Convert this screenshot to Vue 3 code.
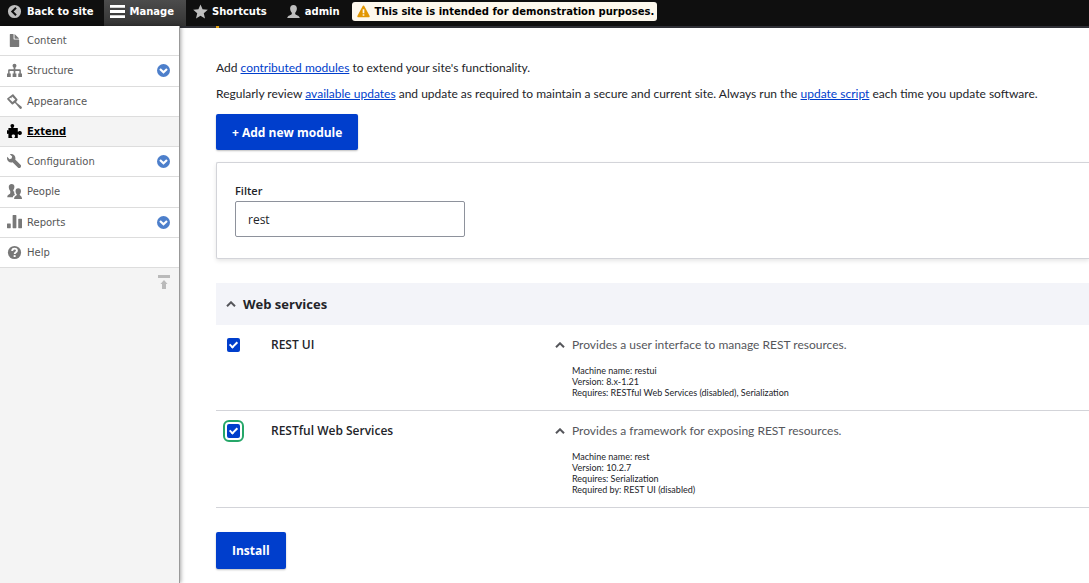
<script setup>
import { ref } from 'vue'

const menu = [
  { name: 'Content', icon: 'content' },
  { name: 'Structure', icon: 'structure', sub: true },
  { name: 'Appearance', icon: 'appearance' },
  { name: 'Extend', icon: 'extend', active: true },
  { name: 'Configuration', icon: 'configuration', sub: true },
  { name: 'People', icon: 'people' },
  { name: 'Reports', icon: 'reports', sub: true },
  { name: 'Help', icon: 'help' },
]

const filter = ref('rest')

const modules = ref([
  {
    id: 'restui',
    name: 'REST UI',
    checked: true,
    description: 'Provides a user interface to manage REST resources.',
    details: [
      'Machine name: restui',
      'Version: 8.x-1.21',
      'Requires: RESTful Web Services (disabled), Serialization',
    ],
  },
  {
    id: 'rest',
    name: 'RESTful Web Services',
    checked: true,
    focused: true,
    description: 'Provides a framework for exposing REST resources.',
    details: [
      'Machine name: rest',
      'Version: 10.2.7',
      'Requires: Serialization',
      'Required by: REST UI (disabled)',
    ],
  },
])
</script>

<template>
  <div class="page">
    <header class="toolbar">
      <a class="tab back" href="#">
        <svg class="tab-icon" viewBox="0 0 16 16"><path fill="#bebebe" fill-rule="evenodd" d="M8 1a7 7 0 1 0 0 14A7 7 0 0 0 8 1zm2.4 10.3L8.9 12.8 4.1 8l4.8-4.8 1.5 1.5L7.1 8z" /></svg>
        Back to site
      </a>
      <a class="tab manage" href="#">
        <svg class="tab-icon" viewBox="0 0 16 16"><path fill="#fff" d="M0 1h16v3H0zM0 6.5h16v3H0zM0 12h16v3H0z" /></svg>
        Manage
      </a>
      <a class="tab" href="#">
        <svg class="tab-icon" viewBox="0 0 16 16"><path fill="#bebebe" d="M8 .5l2.2 5.2 5.6.5-4.3 3.7 1.3 5.6L8 12.6l-4.8 2.9 1.3-5.6L.2 6.2l5.6-.5z" /></svg>
        Shortcuts
      </a>
      <a class="tab" href="#">
        <svg class="tab-icon" viewBox="0 0 16 16"><path fill="#bebebe" d="M8 1c2.4 0 3.7 1.6 3.6 3.9C11.500 7 10.700 8.600 9.800 9.400v1.200c.2 1 4.700 1.500 4.900 4.400H1.300c.2-2.900 4.700-3.400 4.900-4.400V9.400C5.300 8.600 4.500 7 4.400 4.900 4.300 2.600 5.600 1 8 1z" /></svg>
        admin
      </a>
      <div class="notice" role="status">
        <svg class="warn" viewBox="0 0 14 14"><path fill="#e29700" d="M7 .6c.5 0 .8.3 1 .7l5.500 10.300c.5.900 0 1.700-1 1.700h-11c-1 0-1.500-.8-1-1.700L6 1.300c.2-.4.5-.7 1-.7z" /><path fill="#fdf8ed" d="M6.100 4.500h1.800v4.300H6.100zM6.100 10h1.800v1.700H6.100z" /></svg>
        This site is intended for demonstration purposes.
      </div>
    </header>

    <div class="body">
      <aside class="tray">
        <nav class="menu" aria-label="Administration">
          <div v-for="item in menu" :key="item.name" class="menu-row" :class="{ active: item.active }">
            <a href="#" class="menu-link">
              <svg class="menu-icon" viewBox="0 0 16 16" fill="#787878">
                <template v-if="item.icon === 'content'">
                  <path d="M12.502 7h-5C7.226 7 7 6.775 7 6.500v-5c0-.275-.225-.5-.5-.5h-3c-.275 0-.5.225-.5.5v13.029c0 .275.225.5.5.5h9c.275 0 .5-.225.5-.5V7.500c0-.275-.225-.5-.498-.5z" />
                  <path d="M8.502 6h4c.275 0 .34-.159.146-.354L8.355 1.354C8.160 1.159 8.002 1.225 8.002 1.500v4c-.001.275.225.5.5.5z" />
                </template>
                <template v-else-if="item.icon === 'structure'">
                  <circle cx="8" cy="3" r="2.100" />
                  <path d="M7.100 4h1.800v2.700h4.600c.8 0 1.300.5 1.300 1.300v3.300H16V15h-4v-3.700h1.200V8.400H8.900v2.900H10V15H6v-3.700h1.100V8.400H2.800v2.900H4V15H0v-3.700h1.200V8c0-.8.5-1.300 1.300-1.300h4.600z" />
                </template>
                <template v-else-if="item.icon === 'appearance'">
                  <path fill-rule="evenodd" d="M5.700.4L.5 4.500c-.5.4-.5.9-.1 1.300l4.700 5.200c.4.4 1 .4 1.400 0l1.300-1.200c.5-.3.900-.1 1.300.4l4.200 5.100c.6.700 1.600.8 2.200.2s.5-1.600-.2-2.200l-5-4.100c-.5-.4-.6-.9-.3-1.300l1-1.300c.4-.5.3-.9-.1-1.300L6.900.4c-.4-.3-.8-.3-1.200 0zM5.300 2.600L8.800 5.900 5.900 8.600 2.300 5l1.300-1.100 1 1z" />
                </template>
                <template v-else-if="item.icon === 'extend'">
                  <path fill="#000" d="M4.600 4.200C4.700 3.300 3.700 3 3.700 1.800 3.700.8 4.500 0 5.700 0s2 .8 2 1.800c0 1.200-1 1.500-.9 2.400h4.700v4c1 .2 1.200-.7 2.400-.7 1.100 0 2 .900 2 2.100s-.9 2.100-2 2.100c-1.200 0-1.400-1-2.400-.8V15H7.900c-.2-1 .8-1.300.8-2.200 0-1-.8-1.700-1.900-1.700s-1.900.7-1.900 1.700c0 .9 1 1.200.8 2.200H1.500v-4.600c-.5 0-.6.3-1.500.1V6.700c.9-.2 1 .2 1.500.1V4.200z" />
                </template>
                <template v-else-if="item.icon === 'configuration'">
                  <path d="M14.416 11.586L8.750 5.921c.15-.449.252-.921.252-1.421 0-2.485-2.016-4.500-4.502-4.500-.505 0-.981.102-1.434.255l2.431 2.431-.588 2.196-2.196.588L.268 3.025C.106 3.489 0 3.981 0 4.500c0 2.486 2.014 4.500 4.500 4.500.5 0 .972-.102 1.421-.251l5.667 5.665c.781.781 2.047.781 2.828 0s.781-2.047 0-2.828z" />
                </template>
                <template v-else-if="item.icon === 'people'">
                  <path d="M4.900 0c2 0 3.100 1.300 3 3.200-.1 1.300-.5 2.300-1.200 3.100-.2 1 .1 1.400 1 1.800-.2 2.100.4 3 1 3.600-1.400.5-2.200 1-2.500 2.300H.3c0-3 2.700-2.600 3.100-4.100.2-.7.200-2-.1-2.600-.8-.9-1.300-2-1.400-4C1.800 1.400 2.900 0 4.900 0z" />
                  <path d="M12 4.500c1.900 0 3 1.200 2.900 3.100-.1 1.500-.6 2.400-1.300 3.200v1c.3.900 2.400 1 2.400 4.200H7.600c0-3.200 2.500-3.300 2.800-4.200v-1C9.700 10 9.200 9.100 9.100 7.600 9 5.700 10.100 4.500 12 4.500z" />
                </template>
                <template v-else-if="item.icon === 'reports'">
                  <path d="M.5 9h3c.3 0 .5.2.5.5v4c0 .3-.2.5-.5.5h-3c-.3 0-.5-.2-.5-.5v-4c0-.3.2-.5.5-.5zM6.500 0h3c.3 0 .5.2.5.5v13c0 .3-.2.5-.5.5h-3c-.3 0-.5-.2-.5-.5V.5c0-.3.2-.5.5-.5zM12.500 4h3c.3 0 .5.2.5.500v9c0 .3-.2.5-.5.5h-3c-.3 0-.5-.2-.5-.5v-9c0-.3.2-.5.5-.5z" />
                </template>
                <template v-else>
                  <circle cx="8" cy="8" r="7" />
                  <path d="M5.500 6.500C5.500 4.700 6.500 3.900 8 3.900s2.600.8 2.600 2.200c0 1.700-2.400 1.700-2.400 3.600" fill="none" stroke="#fff" stroke-width="2" />
                  <path d="M7.100 10.800h2.100v2H7.100z" fill="#fff" />
                </template>
              </svg>
              <span>{{ item.name }}</span>
            </a>
            <button v-if="item.sub" class="expand" type="button" :aria-label="'Extend ' + item.name">
              <svg viewBox="0 0 13 13"><circle cx="6.500" cy="6.500" r="6.500" fill="#4d7fcb" /><path d="M3 5l3.500 3.300L10 5" fill="none" stroke="#fff" stroke-width="2.200" /></svg>
            </button>
          </div>
        </nav>
        <button class="orient" type="button" aria-label="Horizontal orientation">
          <svg viewBox="0 0 12 15"><path fill="#bababa" d="M0 0h12v3H0zM6 5l3.500 4H8v5H4V9H2.500z" /></svg>
        </button>
      </aside>

      <main class="main">
        <div class="tabline"><span></span></div>
        <p>Add <a href="#">contributed modules</a> to extend your site's functionality.</p>
        <p>Regularly review <a href="#">available updates</a> and update as required to maintain a secure and current site. Always run the <a href="#">update script</a> each time you update software.</p>
        <a class="primary add" href="#">+ Add new module</a>

        <section class="filter">
          <label for="filter">Filter</label>
          <input id="filter" v-model="filter" type="text">
        </section>

        <h2 class="group">
          <svg class="chev" viewBox="0 0 10 6"><path d="M1 5.300l4-4 4 4" /></svg>
          Web services
        </h2>
        <table>
          <tbody>
            <tr v-for="m in modules" :key="m.id">
              <td class="check"><input :id="m.id" v-model="m.checked" type="checkbox" :class="{ focused: m.focused }"></td>
              <td class="name"><label :for="m.id">{{ m.name }}</label></td>
              <td class="desc">
                <div class="summary">
                  <svg class="chev" viewBox="0 0 10 6"><path d="M1 5.300l4-4 4 4" /></svg>
                  {{ m.description }}
                </div>
                <div class="details">
                  <div v-for="d in m.details" :key="d">{{ d }}</div>
                </div>
              </td>
            </tr>
          </tbody>
        </table>
        <button class="primary install" type="button">Install</button>
      </main>
    </div>
  </div>
</template>

<style>
body {
  margin: 0;
  background: #fff;
}
</style>

<style scoped>
.page {
  min-height: 100vh;
  display: flex;
  flex-direction: column;
  overflow: hidden;
  font-family: Lato, "Open Sans", sans-serif;
  font-size: 12px;
  color: #232429;
}
.toolbar {
  display: flex;
  height: 26px;
  background: #0f0f0f;
  font: bold 10px/24px "DejaVu Sans", sans-serif;
  color: #fff;
  white-space: nowrap;
}
.tab {
  display: flex;
  gap: 4px;
  padding: 0 12px 0 7px;
  color: #fff;
  text-decoration: none;
}
.tab-icon {
  width: 15px;
  height: 15px;
  margin-top: 4px;
}
.back {
  gap: 5px;
  padding-right: 10px;
}
.manage {
  gap: 5px;
  padding: 0 12px 0 6px;
  background: linear-gradient(#4c4c4c, #333);
}
.notice {
  display: flex;
  align-items: center;
  gap: 5px;
  height: 19px;
  margin: 2px 0 0;
  padding: 0 3px 0 5px;
  border-radius: 3px;
  background: #fdf8ed;
  color: #000;
}
.warn {
  width: 13px;
  height: 13px;
}
.body {
  flex: 1;
  display: flex;
}
.tray {
  position: relative;
  box-sizing: border-box;
  flex: 0 0 180px;
  background: #f4f4f4;
  border-right: 1px solid #999;
  box-shadow: 1px 0 4px rgba(0, 0, 0, 0.35);
  font: 10px/15px "DejaVu Sans", sans-serif;
}
.menu {
  display: grid;
  grid-auto-rows: 1fr;
  height: 242px;
}
.menu-row {
  display: flex;
  align-items: center;
  justify-content: space-between;
  padding: 0 9px 0 7px;
  background: #fff;
  border-bottom: 1px solid #ddd;
}
.menu-row.active {
  background: #f4f4f4;
}
.menu-link {
  display: flex;
  align-items: center;
  gap: 5px;
  color: #565656;
  text-decoration: none;
}
.active .menu-link {
  color: #000;
  font-weight: bold;
}
.active .menu-link span {
  text-decoration: underline;
}
.menu-icon {
  width: 15px;
  height: 15px;
}
.expand,
.orient {
  padding: 0;
  border: 0;
  background: none;
}
.expand svg {
  display: block;
  width: 13px;
  height: 13px;
}
.orient {
  display: block;
  margin: 7px 9px 0 auto;
}
.orient svg {
  display: block;
  width: 12px;
  height: 15px;
}
.main {
  flex: 1;
  min-width: 0;
  padding-left: 36px;
}
.tabline {
  height: 2px;
  margin-left: -36px;
  padding-left: 36px;
  margin-bottom: 31px;
  background: #2f3036;
}
.tabline span {
  display: block;
  width: 3px;
  height: 2px;
  background: #e0a010;
}
p {
  margin: 0 0 8px;
  line-height: 18px;
}
p a {
  color: #003ecc;
}
.primary {
  display: inline-block;
  padding: 10px 16px 9px;
  border: 0;
  border-radius: 2px;
  background: #003ecc;
  box-shadow: 0 1px 2px rgba(0, 0, 0, 0.25);
  color: #fff;
  font: bold 12px/18px "Open Sans", sans-serif;
  text-decoration: none;
}
.add {
  padding-bottom: 8px;
  margin-top: 3px;
}
.filter {
  display: flex;
  flex-direction: column;
  align-items: flex-start;
  margin-top: 12px;
  padding: 20px 18px 21px;
  border: 1px solid #d3d4d9;
  border-right: 0;
  border-radius: 2px 0 0 2px;
  box-shadow: 0 2px 4px rgba(0, 0, 0, 0.1);
}
.filter label {
  font: 600 11px/16px "Open Sans", sans-serif;
  margin-bottom: 2px;
}
.filter input {
  box-sizing: border-box;
  width: 230px;
  height: 36px;
  padding: 0 12px;
  border: 1px solid #8e929c;
  border-radius: 2px;
  color: #232429;
  font: 12px "Open Sans", sans-serif;
}
.group {
  display: flex;
  align-items: center;
  gap: 7px;
  margin: 24px 0 0;
  padding: 0 10px;
  height: 42px;
  background: #f3f4f9;
  font: bold 13px "Open Sans", sans-serif;
}
.chev {
  width: 10px;
  height: 6px;
  fill: none;
  stroke: #55565b;
  stroke-width: 2;
}
table {
  width: 100%;
  border-collapse: collapse;
}
td {
  padding: 11px 0 12px;
  vertical-align: top;
  border-bottom: 1px solid #d3d4d9;
  line-height: 18px;
}
.check {
  width: 55px;
}
.check input {
  appearance: none;
  display: block;
  width: 13px;
  height: 14px;
  margin: 2px 11px;
  border-radius: 2px;
  background: #fff;
  outline: 1px solid #8e929c;
}
.check input:checked {
  position: relative;
  outline-color: transparent;
  background: #003ecc;
}
.check input:checked::after {
  content: "";
  position: absolute;
  left: 4px;
  top: 2px;
  width: 3px;
  height: 6px;
  border: solid #fff;
  border-width: 0 2px 2px 0;
  transform: rotate(45deg);
}
.check input.focused {
  outline: 2px solid #26a769;
  outline-offset: 2px;
  box-shadow: 0 0 0 2px #fff;
}
.name {
  width: 284px;
  font-family: "Open Sans", sans-serif;
  font-weight: 600;
}
.desc {
  color: #55565b;
}
.summary {
  display: flex;
  align-items: center;
  gap: 7px;
}
.details {
  padding: 11px 0 0 17px;
  color: #232429;
  font-size: 9px;
  line-height: 11px;
}
.install {
  margin: 24px 0 14px;
}
</style>
